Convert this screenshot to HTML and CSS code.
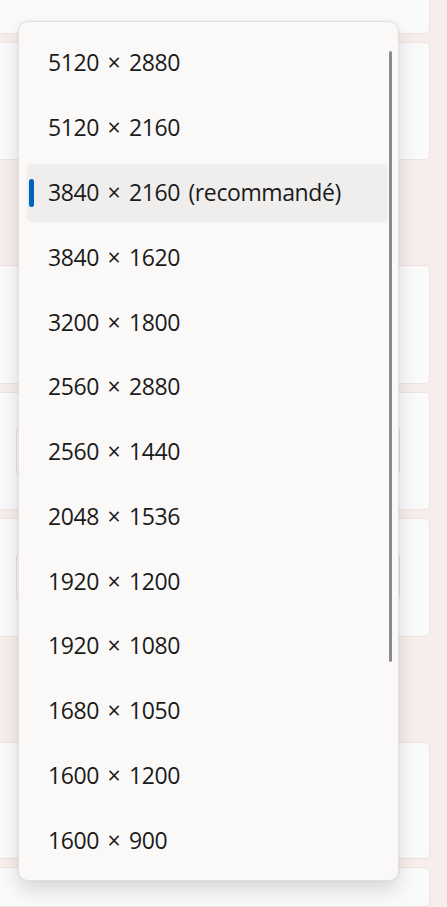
FILE: index.html
```html
<!DOCTYPE html>
<html lang="fr">
<head>
<meta charset="utf-8">
<title>Résolution d'affichage</title>
<link rel="stylesheet" href="styles.css">
</head>
<body>
<div class="page">
  <div class="group first">
    <div class="card h74"></div>
    <div class="card h118"></div>
  </div>
  <div class="group">
    <div class="card h119"></div>
    <div class="card h118 padded"><div class="combo"></div></div>
    <div class="card h119 padded"><div class="combo"></div></div>
  </div>
  <div class="group">
    <div class="card h117"></div>
    <div class="card h40"></div>
  </div>
</div>

<div class="flyout">
  <ul class="list">
    <li class="item"><span class="label">5120 × 2880</span></li>
    <li class="item"><span class="label">5120 × 2160</span></li>
    <li class="item selected"><span class="indicator"></span><span class="label">3840 × 2160 (recommandé)</span></li>
    <li class="item"><span class="label">3840 × 1620</span></li>
    <li class="item"><span class="label">3200 × 1800</span></li>
    <li class="item"><span class="label">2560 × 2880</span></li>
    <li class="item"><span class="label">2560 × 1440</span></li>
    <li class="item"><span class="label">2048 × 1536</span></li>
    <li class="item"><span class="label">1920 × 1200</span></li>
    <li class="item"><span class="label">1920 × 1080</span></li>
    <li class="item"><span class="label">1680 × 1050</span></li>
    <li class="item"><span class="label">1600 × 1200</span></li>
    <li class="item"><span class="label">1600 × 900</span></li>
  </ul>
  <div class="scrollbar"></div>
</div>
</body>
</html>
```

FILE: styles.css
```css
html, body {
  margin: 0;
  padding: 0;
  height: 100%;
  overflow: hidden;
}

body {
  background: #f7eeec;
  font-family: "Open Sans", "Noto Sans", "Liberation Sans", sans-serif;
  color: #1b1b1b;
}

.page {
  display: flex;
  flex-direction: column;
  margin-left: -12px;
  width: 442px;
}

.group {
  display: flex;
  flex-direction: column;
  gap: 8px;
  margin-top: 105px;
}

.group.first {
  margin-top: -40px;
}

.card {
  box-sizing: border-box;
  background: #fbfafa;
  border: 1px solid #ebe4e3;
  border-radius: 5px;
}

.h40 { height: 40px; }
.h74 { height: 74px; }
.h117 { height: 117px; }
.h118 { height: 118px; }
.h119 { height: 119px; }

.padded { padding-top: 34px; }

.combo {
  box-sizing: border-box;
  margin-left: 27px;
  width: 384px;
  height: 48px;
  border: 1px solid #e6e0df;
  border-radius: 4px;
  background: #fdfcfc;
}

.flyout {
  position: absolute;
  left: 18px;
  top: 21px;
  width: 381px;
  box-sizing: border-box;
  background: #faf9f8;
  border: 1px solid #e3e0df;
  border-radius: 10px;
  padding: 9px 0 7px;
  box-shadow: 0 0 3px rgba(0, 0, 0, 0.07), 0 10px 20px rgba(0, 0, 0, 0.13);
}

.list {
  list-style: none;
  margin: 0;
  padding: 0;
  display: flex;
  flex-direction: column;
}

.item {
  position: relative;
  display: flex;
  align-items: center;
  box-sizing: border-box;
  height: 58px;
  margin: 3.4px 10px 3.4px 8px;
  padding: 0 0 2px 21px;
  border-radius: 5px;
  font-size: 23px;
  letter-spacing: -0.4px;
  word-spacing: 3px;
  white-space: nowrap;
}

.item.selected {
  background: #f0eeed;
}

.indicator {
  position: absolute;
  left: 2px;
  top: 15px;
  width: 5px;
  height: 28px;
  border-radius: 3px;
  background: #0064bf;
}

.scrollbar {
  position: absolute;
  left: 370px;
  top: 29px;
  width: 3px;
  height: 611px;
  border-radius: 2px;
  background: #8a8a8a;
}
```
